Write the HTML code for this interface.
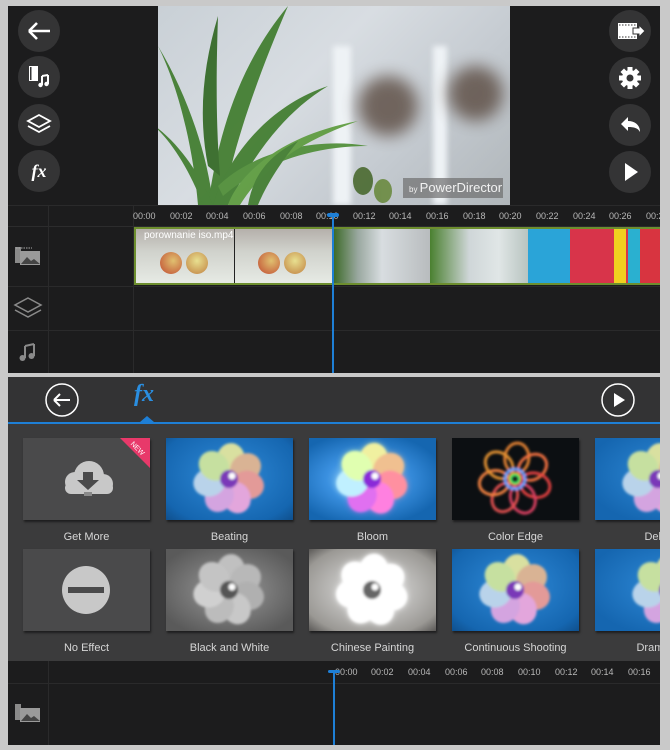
<!DOCTYPE html>
<html><head><meta charset="utf-8">
<style>
*{margin:0;padding:0;box-sizing:border-box}
body{width:670px;height:750px;background:#c9c9c9;position:relative;overflow:hidden;font-family:"Liberation Sans",sans-serif}
.abs{position:absolute}
.top{left:8px;top:6px;width:652px;height:367px;background:#1c1c1d;overflow:hidden}
.btn{position:absolute;width:42px;height:42px;border-radius:50%;background:#343435}
.ruler span{position:absolute;font-size:9px;color:#b8b8b8;white-space:nowrap}
.bot{left:8px;top:377px;width:652px;height:368px;background:#3b3b3c;overflow:hidden}
.thumb{position:absolute;width:127px;height:82px;box-shadow:1px 2px 2px rgba(0,0,0,.5);overflow:hidden}
.lbl{position:absolute;width:127px;text-align:center;font-size:11px;color:#d6d6d6;white-space:nowrap}
</style></head><body>
<svg width="0" height="0" style="position:absolute">
<defs>
<filter id="bl"><feGaussianBlur stdDeviation="1.2"/></filter>
<filter id="bl2"><feGaussianBlur stdDeviation="3"/></filter>
<g id="fl">
<g filter="url(#bl)">
<ellipse cx="63" cy="21" rx="14" ry="16" fill="var(--c1,#d9e0a0)" transform="rotate(5 63 41)"/>
<ellipse cx="63" cy="21" rx="14" ry="16" fill="var(--c2,#d9b394)" transform="rotate(56 63 41)"/>
<ellipse cx="63" cy="21" rx="14" ry="16" fill="var(--c3,#e39a98)" transform="rotate(107 63 41)"/>
<ellipse cx="63" cy="21" rx="14" ry="16" fill="var(--c4,#e3a6dc)" transform="rotate(158 63 41)"/>
<ellipse cx="63" cy="21" rx="14" ry="16" fill="var(--c5,#d4a4e0)" transform="rotate(209 63 41)"/>
<ellipse cx="63" cy="21" rx="14" ry="16" fill="var(--c6,#b9d3ea)" transform="rotate(260 63 41)"/>
<ellipse cx="63" cy="21" rx="14" ry="16" fill="var(--c7,#c6e0a0)" transform="rotate(311 63 41)"/>
<circle cx="63" cy="41" r="9" fill="var(--cc,#7a38b8)"/>
<circle cx="66" cy="38" r="3.5" fill="#fff"/>
</g></g>
</defs></svg>

<!-- TOP PANEL -->
<div class="abs top">
  <div class="btn" style="left:10px;top:4px"><svg width="42" height="42"><path d="M11 21H32M11 21l8-8M11 21l8 8" stroke="#fff" stroke-width="2.6" fill="none"/></svg></div>
  <div class="btn" style="left:10px;top:50px"><svg width="42" height="42"><rect x="11" y="10" width="9" height="15" fill="#fff"/><rect x="12" y="11" width="1.5" height="13" fill="#343435"/><path d="M24 20v9M30 19v9M24 20l6-1" stroke="#fff" stroke-width="2" fill="none"/><circle cx="22.5" cy="29" r="2.2" fill="#fff"/><circle cx="28.5" cy="28" r="2.2" fill="#fff"/></svg></div>
  <div class="btn" style="left:10px;top:98px"><svg width="42" height="42"><path d="M21 11l11 6-11 6-11-6z M10 22l11 6 11-6" stroke="#fff" stroke-width="1.8" fill="none"/></svg></div>
  <div class="btn" style="left:10px;top:144px"><div style="color:#fff;font:italic bold 18px 'Liberation Serif',serif;text-align:center;line-height:42px">fx</div></div>

  <div class="btn" style="left:601px;top:4px"><svg width="42" height="42"><rect x="9" y="13" width="19" height="16" fill="#fff"/><path d="M10 15h17M10 27h17" stroke="#343435" stroke-width="1" stroke-dasharray="1.5 1.5"/><path d="M24 18h6v-3l6 6-6 6v-3h-6z" fill="#fff" stroke="#343435" stroke-width="1"/></svg></div>
  <div class="btn" style="left:601px;top:51px"><svg width="42" height="42"><g transform="translate(21 21)" fill="#fff"><circle r="8"/><g id="t"><rect x="-2.5" y="-11" width="5" height="5"/></g><use href="#t" transform="rotate(45)"/><use href="#t" transform="rotate(90)"/><use href="#t" transform="rotate(135)"/><use href="#t" transform="rotate(180)"/><use href="#t" transform="rotate(225)"/><use href="#t" transform="rotate(270)"/><use href="#t" transform="rotate(315)"/><circle r="3.5" fill="#343435"/></g></svg></div>
  <div class="btn" style="left:601px;top:98px"><svg width="42" height="42"><path d="M12 20l7-7v4c7 0 12 4 12 11-2-4-6-5-12-5v4z" fill="#fff"/></svg></div>
  <div class="btn" style="left:601px;top:145px"><svg width="42" height="42"><path d="M16 12l13 9-13 9z" fill="#fff"/></svg></div>

  <!-- video -->
  <div class="abs" style="left:150px;top:0;width:352px;height:199px;overflow:hidden;background:linear-gradient(135deg,#c9d0d6 0%,#d8dde2 40%,#c4cad0 70%,#b0b6ba 100%)">
    <div class="abs" style="left:175px;top:40px;width:18px;height:159px;background:#eef2f5;filter:blur(3px)"></div>
    <div class="abs" style="left:275px;top:40px;width:14px;height:159px;background:#eef2f5;filter:blur(3px)"></div>
    <div class="abs" style="left:200px;top:70px;width:60px;height:60px;border-radius:50%;background:#5a4a40;filter:blur(8px);opacity:.8"></div>
    <div class="abs" style="left:290px;top:60px;width:55px;height:55px;border-radius:50%;background:#5a4a40;filter:blur(8px);opacity:.8"></div>
    <svg class="abs" style="left:0;top:0" width="352" height="199"><g fill="#3d7a2a" opacity=".9">
      <path d="M40 199C35 140 20 80 0 40 30 90 50 150 55 199z"/>
      <path d="M50 199C60 130 80 60 130 0 100 70 75 140 65 199z"/>
      <path d="M55 199C70 150 110 100 170 80 120 110 90 160 70 199z"/>
      <path d="M45 199C30 160 10 130 -10 115 20 135 40 165 55 199z"/>
      <path d="M60 180C90 150 150 130 210 140 150 140 100 160 65 190z" fill="#4c8c33"/>
      <path d="M50 160C40 110 45 60 60 10 58 70 58 120 62 170z" fill="#2f6620"/>
      <path d="M70 199C80 170 120 130 200 115 130 140 100 170 82 199z" fill="#5a9a3a"/>
      <path d="M90 199C95 170 110 150 140 135 120 160 108 180 100 199z"/>
      <ellipse cx="205" cy="175" rx="10" ry="14" fill="#4a6a30"/>
      <ellipse cx="225" cy="185" rx="9" ry="12" fill="#6a8a40"/>
    </g></svg>
    <div class="abs" style="left:245px;top:172px;width:100px;height:20px;background:rgba(110,110,110,.7);color:#f2f2f2;font-size:13px;line-height:20px;padding-left:6px;white-space:nowrap;overflow:hidden"><span style="font-size:8px">by </span>PowerDirector</div>
  </div>

  <!-- grid lines -->
  <div class="abs" style="left:0;top:199px;width:652px;height:1px;background:#2a2a2b"></div>
  <div class="abs" style="left:0;top:220px;width:652px;height:1px;background:#2c2c2d"></div>
  <div class="abs" style="left:40px;top:199px;width:1px;height:168px;background:#2a2a2b"></div>
  <div class="abs" style="left:125px;top:199px;width:1px;height:168px;background:#2a2a2b"></div>
  <div class="abs" style="left:0;top:280px;width:652px;height:1px;background:#2a2a2b"></div>
  <div class="abs" style="left:0;top:324px;width:652px;height:1px;background:#2a2a2b"></div>

  <div class="ruler">
    <span style="left:125px;top:205px">00:00</span><span style="left:162px;top:205px">00:02</span><span style="left:198px;top:205px">00:04</span><span style="left:235px;top:205px">00:06</span><span style="left:272px;top:205px">00:08</span><span style="left:308px;top:205px">00:10</span><span style="left:345px;top:205px">00:12</span><span style="left:381px;top:205px">00:14</span><span style="left:418px;top:205px">00:16</span><span style="left:455px;top:205px">00:18</span><span style="left:491px;top:205px">00:20</span><span style="left:528px;top:205px">00:22</span><span style="left:565px;top:205px">00:24</span><span style="left:601px;top:205px">00:26</span><span style="left:638px;top:205px">00:28</span>
  </div>

  <!-- clip strip -->
  <div class="abs" style="left:126px;top:221px;width:526px;height:58px;border-top:2px solid #6d8e2e;border-bottom:2px solid #6d8e2e;overflow:hidden;background:#ccc">
    <div class="abs" style="left:0;top:0;width:100px;height:56px;background:linear-gradient(180deg,#b5b0ab 0%,#d0d2cc 40%,#e8ece6 100%);border-left:2px solid #6d8e2e"></div>
    <div class="abs" style="left:100px;top:0;width:100px;height:56px;background:linear-gradient(180deg,#b5b0ab 0%,#d0d2cc 40%,#e8ece6 100%);border-left:1px solid #222"></div>
    <div class="abs" style="left:26px;top:23px;width:22px;height:22px;border-radius:50%;background:radial-gradient(circle at 60% 40%,#e0c070,#c04a30)"></div>
    <div class="abs" style="left:52px;top:23px;width:22px;height:22px;border-radius:50%;background:radial-gradient(circle at 50% 40%,#e8e090,#c08040)"></div>
    <div class="abs" style="left:124px;top:23px;width:22px;height:22px;border-radius:50%;background:radial-gradient(circle at 60% 40%,#e0c070,#c04a30)"></div>
    <div class="abs" style="left:150px;top:23px;width:22px;height:22px;border-radius:50%;background:radial-gradient(circle at 50% 40%,#e8e090,#c08040)"></div>
    <div class="abs" style="left:200px;top:0;width:96px;height:56px;background:linear-gradient(90deg,#3e6b2a 0%,#9aa8a0 25%,#d8dde0 50%,#b8bcbe 100%)"></div>
    <div class="abs" style="left:296px;top:0;width:98px;height:56px;background:linear-gradient(90deg,#4a8030 0%,#cfd6d8 40%,#e0e6e6 70%,#b8c4c0 100%)"></div>
    <div class="abs" style="left:394px;top:0;width:42px;height:56px;background:#2aa4d8"></div>
    <div class="abs" style="left:436px;top:0;width:58px;height:56px;background:#d8344a"></div>
    <div class="abs" style="left:480px;top:0;width:12px;height:56px;background:#f0d020"></div>
    <div class="abs" style="left:494px;top:0;width:12px;height:56px;background:#2ab0d0"></div>
    <div class="abs" style="left:506px;top:0;width:20px;height:56px;background:#d83440"></div>
    <div class="abs" style="left:10px;top:1px;color:#fff;font-size:10px;white-space:nowrap">porownanie iso.mp4</div>
  </div>

  <!-- track icons -->
  <svg class="abs" style="left:7px;top:240px" width="26" height="20"><rect x="0" y="1" width="6" height="16" fill="#8a8a8a"/><rect x="5" y="5" width="20" height="14" fill="#9a9a9a"/><path d="M6 18l6-7 4 4 3-2 6 5z" fill="#444"/><path d="M1 2h16" stroke="#aaa" stroke-dasharray="1.5 1"/></svg>
  <svg class="abs" style="left:5px;top:290px" width="30" height="24"><path d="M15 2l13 7-13 7-13-7z M2 14l13 7 13-7" stroke="#8a8a8a" stroke-width="1.5" fill="none"/></svg>
  <svg class="abs" style="left:10px;top:336px" width="20" height="20"><path d="M7 4v12M16 2v12M7 4l9-2" stroke="#8a8a8a" stroke-width="2" fill="none"/><circle cx="4.5" cy="16" r="3" fill="#8a8a8a"/><circle cx="13.5" cy="14" r="3" fill="#8a8a8a"/></svg>

  <!-- playhead -->
  <div class="abs" style="left:324px;top:209px;width:2px;height:158px;background:#1e7fd6"></div>
  <div class="abs" style="left:319px;top:207px;width:12px;height:4px;background:#1e7fd6;border-radius:2px"></div>
</div>

<!-- BOTTOM PANEL -->
<div class="abs bot">
  <div class="abs" style="left:0;top:0;width:652px;height:45px;background:#333334"></div>
  <div class="abs" style="left:0;top:45px;width:652px;height:2px;background:#1e7fd6"></div>
  <div class="abs" style="left:132px;top:39px;width:0;height:0;border-left:7px solid transparent;border-right:7px solid transparent;border-bottom:6px solid #1e7fd6"></div>
  <svg class="abs" style="left:37px;top:6px" width="34" height="34"><circle cx="17" cy="17" r="16" stroke="#fff" stroke-width="1.5" fill="none"/><path d="M9 17h16M9 17l6-6M9 17l6 6" stroke="#fff" stroke-width="2" fill="none"/></svg>
  <div class="abs" style="left:126px;top:4px;color:#2a8ee0;font:italic bold 24px 'Liberation Serif',serif">fx</div>
  <svg class="abs" style="left:593px;top:6px" width="34" height="34"><circle cx="17" cy="17" r="16" stroke="#fff" stroke-width="1.5" fill="none"/><path d="M13 10l11 7-11 7z" fill="#fff"/></svg>

  <!-- row 1 -->
  <div class="thumb" style="left:15px;top:61px;background:#4a4a4b">
    <svg width="127" height="82"><g fill="#c8c8c8"><circle cx="52" cy="44" r="10"/><circle cx="66" cy="38" r="15"/><circle cx="80" cy="46" r="10"/><rect x="42" y="44" width="48" height="12" rx="6"/></g><path d="M60 34h10v8h6l-11 10-11-10h6z" fill="#4a4a4b"/><rect x="61" y="54" width="8" height="4" fill="#8a8a8a"/><path d="M97 0h30v30z" fill="#e8396a"/><text x="113" y="12" font-size="7" fill="#fff" font-family="Liberation Sans" transform="rotate(45 113 12)" text-anchor="middle">NEW</text></svg>
  </div>
  <div class="thumb" style="left:158px;top:61px;background:radial-gradient(ellipse at 50% 45%,#2f8ad8,#1566b0 80%,#0f4f8c)"><svg width="127" height="82"><use href="#fl"/></svg></div>
  <div class="thumb" style="left:301px;top:61px;background:radial-gradient(ellipse at 45% 50%,#9fdcff 0%,#3a90e0 40%,#1566b0 80%)"><svg width="127" height="82" style="--c1:#f0f0a0;--c2:#f0c090;--c3:#ff90a0;--c4:#ff80e0;--c5:#e070f0;--c6:#c0f0ff;--c7:#e0ffb0;--cc:#8a2ad8"><g filter="url(#bl2)" opacity=".7"><use href="#fl"/></g><use href="#fl"/></svg></div>
  <div class="thumb" style="left:444px;top:61px;background:#0c0f12"><svg width="127" height="82"><g fill="none" stroke-width="3" filter="url(#bl)"><ellipse cx="63" cy="20" rx="12" ry="15" stroke="#e08030" transform="rotate(5 63 41)"/><ellipse cx="63" cy="20" rx="12" ry="15" stroke="#f07040" transform="rotate(56 63 41)"/><ellipse cx="63" cy="20" rx="12" ry="15" stroke="#e04040" transform="rotate(107 63 41)"/><ellipse cx="63" cy="20" rx="12" ry="15" stroke="#d84060" transform="rotate(158 63 41)"/><ellipse cx="63" cy="20" rx="12" ry="15" stroke="#e05050" transform="rotate(209 63 41)"/><ellipse cx="63" cy="20" rx="12" ry="15" stroke="#f08040" transform="rotate(260 63 41)"/><ellipse cx="63" cy="20" rx="12" ry="15" stroke="#e09030" transform="rotate(311 63 41)"/><circle cx="63" cy="41" r="10" stroke="#60a0ff"/><circle cx="63" cy="41" r="4" stroke="#40e060"/></g></svg></div>
  <div class="thumb" style="left:587px;top:61px;background:radial-gradient(ellipse at 60% 45%,#2f8ad8,#1566b0 80%)"><svg width="127" height="82"><use href="#fl"/></svg></div>

  <div class="lbl" style="left:15px;top:154px">Get More</div>
  <div class="lbl" style="left:158px;top:154px">Beating</div>
  <div class="lbl" style="left:301px;top:154px">Bloom</div>
  <div class="lbl" style="left:444px;top:154px">Color Edge</div>
  <div class="lbl" style="left:587px;top:154px">Delay</div>

  <!-- row 2 -->
  <div class="thumb" style="left:15px;top:172px;background:#4a4a4b"><svg width="127" height="82"><circle cx="63" cy="41" r="24" fill="#c8c8c8"/><rect x="45" y="38" width="36" height="6" fill="#4a4a4b"/></svg></div>
  <div class="thumb" style="left:158px;top:172px;background:radial-gradient(ellipse at 50% 50%,#9a9a9a,#5a5a5a 85%)"><svg width="127" height="82" style="--c1:#c0c0c0;--c2:#b8b8b8;--c3:#b0b0b0;--c4:#c8c8c8;--c5:#bcbcbc;--c6:#d0d0d0;--c7:#c4c4c4;--cc:#555"><use href="#fl"/></svg></div>
  <div class="thumb" style="left:301px;top:172px;background:radial-gradient(ellipse at 50% 50%,#e8e8e8,#9a9894 80%,#5a5856)"><svg width="127" height="82" style="--c1:#fff;--c2:#fff;--c3:#fff;--c4:#fff;--c5:#fff;--c6:#fff;--c7:#fff;--cc:#666"><g filter="url(#bl2)"><use href="#fl"/></g><use href="#fl"/></svg></div>
  <div class="thumb" style="left:444px;top:172px;background:radial-gradient(ellipse at 50% 45%,#2f8ad8,#1566b0 80%,#0f4f8c)"><svg width="127" height="82"><use href="#fl"/></svg></div>
  <div class="thumb" style="left:587px;top:172px;background:radial-gradient(ellipse at 60% 45%,#2f8ad8,#1566b0 80%)"><svg width="127" height="82"><g transform="translate(10 0)"><use href="#fl"/></g></svg></div>

  <div class="lbl" style="left:15px;top:265px">No Effect</div>
  <div class="lbl" style="left:158px;top:265px">Black and White</div>
  <div class="lbl" style="left:301px;top:265px">Chinese Painting</div>
  <div class="lbl" style="left:444px;top:265px">Continuous Shooting</div>
  <div class="lbl" style="left:587px;top:265px">Dramatic</div>

  <!-- bottom timeline -->
  <div class="abs" style="left:0;top:284px;width:652px;height:84px;background:#1c1c1d"></div>
  <div class="abs" style="left:0;top:306px;width:652px;height:1px;background:#2a2a2b"></div>
  <div class="abs" style="left:40px;top:284px;width:1px;height:84px;background:#2a2a2b"></div>
  <div class="ruler">
    <span style="left:327px;top:290px">00:00</span><span style="left:363px;top:290px">00:02</span><span style="left:400px;top:290px">00:04</span><span style="left:437px;top:290px">00:06</span><span style="left:473px;top:290px">00:08</span><span style="left:510px;top:290px">00:10</span><span style="left:547px;top:290px">00:12</span><span style="left:583px;top:290px">00:14</span><span style="left:620px;top:290px">00:16</span>
  </div>
  <svg class="abs" style="left:7px;top:326px" width="26" height="20"><rect x="0" y="1" width="6" height="16" fill="#8a8a8a"/><rect x="5" y="5" width="20" height="14" fill="#9a9a9a"/><path d="M6 18l6-7 4 4 3-2 6 5z" fill="#444"/></svg>
  <div class="abs" style="left:325px;top:294px;width:2px;height:74px;background:#1e7fd6"></div>
  <div class="abs" style="left:320px;top:293px;width:12px;height:3px;background:#1e7fd6;border-radius:2px"></div>
</div>
</body></html>
